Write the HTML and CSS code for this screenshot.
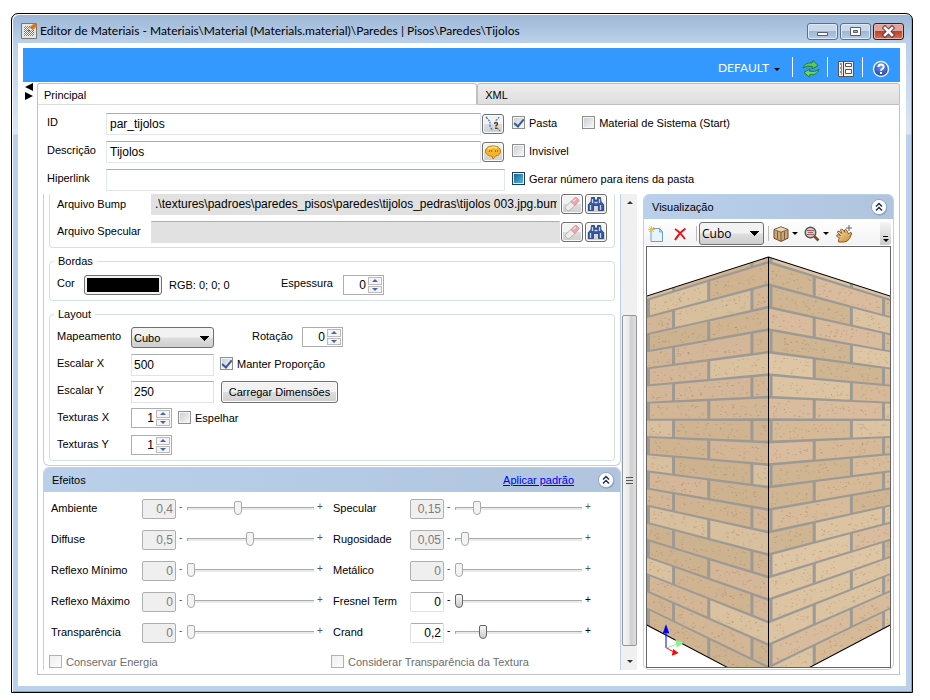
FILE: index.html
```html
<!DOCTYPE html>
<html lang="pt-BR">
<head>
<meta charset="utf-8">
<title>Editor de Materiais</title>
<link rel="stylesheet" href="styles.css">
</head>
<body>
<svg class="defs" width="0" height="0" aria-hidden="true">
  <defs>
    <linearGradient id="tan" x1="0" y1="0" x2="1" y2="1"><stop offset="0" stop-color="#fbe3ae"/><stop offset="1" stop-color="#c98a2e"/></linearGradient>
    <radialGradient id="blue" cx=".5" cy=".3" r=".7"><stop offset="0" stop-color="#6f9cf0"/><stop offset="1" stop-color="#1b3fae"/></radialGradient>
    <symbol id="i-eraser" viewBox="0 0 16 16">
      <path d="M1.500 10.500 7 5.500l4 4-5 4.500Q4.500 15.300 3.200 14.200L1.800 13Q.5 11.800 1.500 10.500z" fill="#eceaea" stroke="#aaa" stroke-width=".8"/>
      <path d="M7 5.500 10.800 1.800q1-.9 2 0l1.700 1.700q1 1 0 2L11 9.500z" fill="#eba5ad" stroke="#d58d95" stroke-width=".8"/>
      <path d="m9 5.500 3-2.500" stroke="#fbd9dc" stroke-width="1.400"/>
    </symbol>
    <symbol id="i-find" viewBox="0 0 16 16">
      <path d="M3.500 1.500h3V4h3V1.500h3l.5 4 2.500 3v6h-5v-5h-5v5h-5v-6L3 5.500z" fill="#35599c" stroke="#1d3a75" stroke-width=".8"/>
      <path d="M2.500 9v5M12.500 9v5M4.500 3v4M11.500 3v4M6.500 6.500h3" fill="none" stroke="#c5d8f5" stroke-width="1.300"/>
    </symbol>
    <symbol id="i-chevrons" viewBox="0 0 18 18">
      <circle cx="9.500" cy="9.800" r="7.800" fill="#8494b0"/><circle cx="9" cy="9" r="7.600" fill="#fff" stroke="#97a9c6"/>
      <path d="m6 8.500 3-3 3 3M6 12.500l3-3 3 3" fill="none" stroke="#1c2c62" stroke-width="1.500"/>
    </symbol>
  </defs>
</svg>

<div class="window">
  <header class="titlebar">
    <svg class="app-icon" width="16" height="16" viewBox="0 0 16 16">
      <path d="M.5.5h15v15H.5z" fill="#e9e5de" stroke="#777" /><path d="M3 3h10v10H3z" fill="#777"/>
      <path d="M3 3.500h10M3 5.500h10M3 7.500h10M3 9.500h10M3 11.500h10" stroke="#fff" stroke-dasharray="1 1"/>
      <path d="M3 4.500h10M3 6.500h10M3 8.500h10M3 10.500h10M3 12.500h10" stroke="#fff" stroke-dasharray="1 1" stroke-dashoffset="1"/>
      <path d="m8 5 3-3 4-2 1 3-4 4z" fill="#d9761c"/><path d="M7.500 8 8.500 5l3 2z" fill="#fff"/><path d="m7 8.500 1-2 1.500 1.500z" fill="#222"/>
    </svg>
    <h1 class="title">Editor de Materiais - Materiais\Material (Materials.material)\Paredes | Pisos\Paredes\Tijolos</h1>
    <div class="win-buttons">
      <button class="win-btn" aria-label="Minimizar"><svg width="29" height="15" viewBox="0 0 29 15"><path d="M9.500 8.500h10v3h-10z" fill="#fff" stroke="#555e6e"/></svg></button>
      <button class="win-btn" aria-label="Maximizar"><svg width="29" height="15" viewBox="0 0 29 15"><path d="M9.500 3.500h10v8h-10z" fill="#fff" stroke="#555e6e"/><path d="M12.500 6.500h4v2h-4z" fill="#9db4d3" stroke="#555e6e"/></svg></button>
      <button class="win-btn close" aria-label="Fechar"><svg width="29" height="15" viewBox="0 0 29 15"><path d="m11 4 7 7M18 4l-7 7" stroke="#5d3a3e" stroke-width="4.500" stroke-linecap="square"/><path d="m11 4 7 7M18 4l-7 7" stroke="#fff" stroke-width="2.600" stroke-linecap="square"/></svg></button>
    </div>
  </header>

  <div class="client">
    <nav class="toolbar">
      <button class="menu-btn">DEFAULT <i class="caret"></i></button>
      <span class="divider"></span>
      <button class="tool" aria-label="Atualizar"><svg width="18" height="18" viewBox="0 0 18 18">
        <path d="M1 8Q3 2 10 3l1-2.500 5 5-6 3.500.5-2.500Q5 5 1 8z" fill="#5fc950" stroke="#187c25" stroke-width=".9"/>
        <path d="M17 9.500Q15 15.500 8 14.500L7 17 2 12.300 8 9l-.5 2.300Q13 12.500 17 9.500z" fill="#6ed45c" stroke="#187c25" stroke-width=".9"/></svg></button>
      <span class="divider"></span>
      <button class="tool" aria-label="Propriedades"><svg width="18" height="18" viewBox="0 0 18 18">
        <path d="M1.500 1.500h15v15h-15z" fill="#f3f0ea" stroke="#555"/><path d="M6.500 1v16" stroke="#444"/><path d="M8.500 3.500h6v3h-6zM8.500 9.500h6v4h-6z" fill="#fff" stroke="#555"/>
        <path d="M3 4h2M4 6h1M3 8h2M4 10h1M3 12h2M4 14h1" stroke="#333"/></svg></button>
      <span class="divider"></span>
      <button class="tool" aria-label="Ajuda"><svg width="18" height="18" viewBox="0 0 18 18">
        <circle cx="9" cy="9" r="7.500" fill="url(#blue)" stroke="#e5edfb" stroke-width="1.500"/>
        <path d="M6.300 7Q6.500 4.500 9 4.500T11.700 7Q11.700 8.300 10 9.200q-1 .5-1 1.600" fill="none" stroke="#fff" stroke-width="1.900"/><path d="M8 12h2v2H8z" fill="#fff"/></svg></button>
    </nav>

    <div class="workspace">
      <div class="splitter"><svg width="9" height="18" viewBox="0 0 9 18"><path d="M8 0v8L0 4zM0 9v8l8-4z"/></svg></div>
      <main class="tabs">
        <div class="tablist" role="tablist">
          <button class="tab active" role="tab" aria-selected="true">Principal</button>
          <button class="tab" role="tab" aria-selected="false">XML</button>
        </div>

        <div class="tabpage">
          <section class="identity">
            <label class="lbl" for="id">ID</label>
            <div class="line">
              <input class="field" id="id" value="par_tijolos">
              <button class="icon-btn" aria-label="Gerar ID"><svg width="18" height="16" viewBox="0 0 18 16">
                <path d="M2 1q3 3 4 5v4q1 3 3 4M15 1q-1 2-4 4M13 12l3 3" fill="none" stroke="#2b6fd4" stroke-width="1.200" stroke-dasharray="2 1"/>
                <path d="M10.500 8q0-1.500 1.500-1.500T13.500 8q0 1-1.500 1.800v.7" fill="none" stroke="#6a3b08" stroke-width="1.500"/><path d="M11 11.500h2V13h-2z" fill="#6a3b08"/></svg></button>
            </div>
            <div class="checks">
              <label class="check"><input type="checkbox" checked>Pasta</label>
              <label class="check">
                <input type="checkbox">Material de Sistema (Start)</label>
            </div>

            <label class="lbl" for="desc">Descrição</label>
            <div class="line">
              <input class="field" id="desc" value="Tijolos">
              <button class="icon-btn" aria-label="Traduzir"><svg width="18" height="16" viewBox="0 0 18 16">
                <path d="M9 2c5 0 7.500 2 7.500 5s-2 4.500-5 5L9 15l-1-2.800C4 12 1.500 10 1.500 7S4 2 9 2z" fill="#f6b526" stroke="#c47d0b"/>
                <path d="M4 5q4-3 9-1" fill="none" stroke="#fde9a9" stroke-width="1.500"/><path d="M5.500 6v2M7.500 6v2M11.500 6v2M13.500 6v2" stroke="#c0601a"/></svg></button>
            </div>
            <div class="checks"><label class="check"><input type="checkbox">Invisível</label></div>

            <label class="lbl" for="link">Hiperlink</label>
            <div class="line wide-line"><input class="field" id="link"></div>
            <div class="checks"><label class="check"><input type="checkbox" class="mixed">Gerar número para itens da pasta</label></div>
          </section>

          <div class="columns">
            <div class="scroller">
              <div class="content">
                <section class="panel top-panel">
                  <div class="group files">
                    <label for="bump">Arquivo Bump</label>
                    <div class="file-line">
                      <input class="field gray" id="bump" readonly value=".\textures\padroes\paredes_pisos\paredes\tijolos_pedras\tijolos 003.jpg.bump">
                      <button class="icon-btn" aria-label="Limpar"><svg width="16" height="16"><use href="#i-eraser"/></svg></button>
                      <button class="icon-btn" aria-label="Procurar"><svg width="16" height="16"><use href="#i-find"/></svg></button>
                    </div>
                    <label for="spec">Arquivo Specular</label>
                    <div class="file-line">
                      <input class="field gray" id="spec" readonly>
                      <button class="icon-btn" aria-label="Limpar"><svg width="16" height="16"><use href="#i-eraser"/></svg></button>
                      <button class="icon-btn" aria-label="Procurar"><svg width="16" height="16"><use href="#i-find"/></svg></button>
                    </div>
                  </div>

                  <fieldset class="group borders">
                    <legend>Bordas</legend>
                    <div class="row">
                      <span class="cor">Cor</span>
                      <button class="swatch" aria-label="Cor da borda"><i></i></button>
                      <span class="rgb">RGB: 0; 0; 0</span>
                      <label class="thick" for="esp">Espessura</label>
                      <span class="spin"><input id="esp" value="0"><span class="arrows"><button aria-label="Aumentar"><i class="up"></i></button><button aria-label="Diminuir"><i class="down"></i></button></span></span>
                    </div>
                  </fieldset>

                  <fieldset class="group layout">
                    <legend>Layout</legend>
                    <div class="rows">
                      <div class="row">
                        <label class="name" for="map">Mapeamento</label>
                        <select class="combo" id="map"><option>Cubo</option></select>
                        <label class="rotation" for="rot">Rotação</label>
                        <span class="spin"><input id="rot" value="0"><span class="arrows"><button aria-label="Aumentar"><i class="up"></i></button><button aria-label="Diminuir"><i class="down"></i></button></span></span>
                      </div>
                      <div class="row">
                        <label class="name" for="ex">Escalar X</label>
                        <input class="field small" id="ex" value="500">
                        <label class="check"><input type="checkbox" checked>Manter Proporção</label>
                      </div>
                      <div class="row">
                        <label class="name" for="ey">Escalar Y</label>
                        <input class="field small" id="ey" value="250">
                        <button class="push">Carregar Dimensões</button>
                      </div>
                      <div class="row">
                        <label class="name" for="tx">Texturas X</label>
                        <span class="spin"><input id="tx" value="1"><span class="arrows"><button aria-label="Aumentar"><i class="up"></i></button><button aria-label="Diminuir"><i class="down"></i></button></span></span>
                        <label class="check"><input type="checkbox">Espelhar</label>
                      </div>
                      <div class="row">
                        <label class="name" for="ty">Texturas Y</label>
                        <span class="spin"><input id="ty" value="1"><span class="arrows"><button aria-label="Aumentar"><i class="up"></i></button><button aria-label="Diminuir"><i class="down"></i></button></span></span>
                      </div>
                    </div>
                  </fieldset>
                </section>

                <section class="panel effects">
                  <header class="panel-head">
                    <h2>Efeitos</h2>
                    <a href="#padrao">Aplicar padrão</a>
                    <button class="collapse" aria-label="Recolher"><svg width="18" height="18"><use href="#i-chevrons"/></svg></button>
                  </header>
                  <div class="effect-grid">
                    <div class="effect off"><label for="e1">Ambiente</label><input class="num" id="e1" value="0,4" disabled><span>-</span><input type="range" aria-label="Ambiente" max="1" step="0.01" value="0.4" disabled><span>+</span></div>
                    <div class="effect off"><label for="e2">Specular</label><input class="num" id="e2" value="0,15" disabled><span>-</span><input type="range" aria-label="Specular" max="1" step="0.01" value="0.15" disabled><span>+</span></div>
                    <div class="effect off"><label for="e3">Diffuse</label><input class="num" id="e3" value="0,5" disabled><span>-</span><input type="range" aria-label="Diffuse" max="1" step="0.01" value="0.5" disabled><span>+</span></div>
                    <div class="effect off"><label for="e4">Rugosidade</label><input class="num" id="e4" value="0,05" disabled><span>-</span><input type="range" aria-label="Rugosidade" max="1" step="0.01" value="0.05" disabled><span>+</span></div>
                    <div class="effect off"><label for="e5">Reflexo Mínimo</label><input class="num" id="e5" value="0" disabled><span>-</span><input type="range" aria-label="Reflexo Mínimo" max="1" step="0.01" value="0" disabled><span>+</span></div>
                    <div class="effect off"><label for="e6">Metálico</label><input class="num" id="e6" value="0" disabled><span>-</span><input type="range" aria-label="Metálico" max="1" step="0.01" value="0" disabled><span>+</span></div>
                    <div class="effect off"><label for="e7">Reflexo Máximo</label><input class="num" id="e7" value="0" disabled><span>-</span><input type="range" aria-label="Reflexo Máximo" max="1" step="0.01" value="0" disabled><span>+</span></div>
                    <div class="effect"><label for="e8">Fresnel Term</label><input class="num" id="e8" value="0"><span>-</span><input type="range" aria-label="Fresnel Term" max="1" step="0.01" value="0"><span>+</span></div>
                    <div class="effect off"><label for="e9">Transparência</label><input class="num" id="e9" value="0" disabled><span>-</span><input type="range" aria-label="Transparência" max="1" step="0.01" value="0" disabled><span>+</span></div>
                    <div class="effect"><label for="e10">Crand</label><input class="num" id="e10" value="0,2"><span>-</span><input type="range" aria-label="Crand" max="1" step="0.01" value="0.2"><span>+</span></div>
                    <label class="check disabled"><input type="checkbox" disabled>Conservar Energia</label>
                    <label class="check disabled"><input type="checkbox" disabled>Considerar Transparência da Textura</label>
                  </div>
                </section>
              </div>

              <div class="scrollbar">
                <button aria-label="Subir"><i class="up"></i></button>
                <div class="track"><div class="thumb"><i></i></div></div>
                <button aria-label="Descer"><i class="down"></i></button>
              </div>
            </div>

            <section class="panel preview">
              <header class="panel-head">
                <h2>Visualização</h2>
                <button class="collapse" aria-label="Recolher"><svg width="18" height="18"><use href="#i-chevrons"/></svg></button>
              </header>
              <div class="preview-tools">
                <button class="tool" aria-label="Novo"><svg width="16" height="16" viewBox="0 0 16 16"><path d="M3 2.500h8.500L14.500 6v9.500H3z" fill="#e8f3fd" stroke="#6d9fcb"/><path d="M11.500 2.500V6h3z" fill="#b8d6ef" stroke="#6d9fcb" stroke-width=".8"/><path d="m1 1 5 5M6 1 1 6M3.500 0v7M0 3.500h7" stroke="#ecc33a"/></svg></button>
                <button class="tool" aria-label="Excluir"><svg width="16" height="16" viewBox="0 0 16 16"><path d="M3 3q5 3 10 10M13.500 2.500Q7 7 3 14" fill="none" stroke="#e0181c" stroke-width="2"/></svg></button>
                <span class="sep"></span>
                <select class="combo" aria-label="Forma"><option>Cubo</option></select>
                <span class="sep"></span>
                <button class="tool wide" aria-label="Vista"><svg width="16" height="16" viewBox="0 0 16 16"><path d="m8 .8 7 2.700v8.700l-7 3.200-7-3.200V3.500z" fill="#c9a67a" stroke="#6b4c2a"/><path d="m1.500 3.700 6.500 2.500 6.500-2.500L8 1.300z" fill="#ecd6b3"/><path d="M1 3.500 8 6.200l7-2.700M8 6.200v9M4.500 5.500v7.500M11.500 5.500v7.500" fill="none" stroke="#6b4c2a" stroke-width=".8"/></svg><i class="caret"></i></button>
                <button class="tool wide" aria-label="Zoom"><svg width="16" height="16" viewBox="0 0 16 16"><circle cx="6.500" cy="6.500" r="5.300" fill="#c3d3d0" stroke="#555" stroke-width="1.400"/><path d="M3 4.500h7M3 8.500h7" stroke="#c33" stroke-width=".8"/><path d="M4 6.500h5" stroke="#777"/><path d="m10.500 10.500 4 4" stroke="#7b4e24" stroke-width="2.600"/></svg><i class="caret"></i></button>
                <button class="tool" aria-label="Mover"><svg width="18" height="18" viewBox="0 0 18 18"><path d="M1.500 11q0-1.800 2-1.200l2 .7L2.500 7.500Q2.300 5.600 4 6.200L7 8.500 5.500 5q.5-1.800 2.200-.5L10 7.500 9.500 5q1-1.500 2.200.2L13.500 9l1.500-1.500q2-.2 1.500 1.500l-2 4.500q-2 3.500-5.500 3.500H3.500V14.500L4.500 13z" fill="url(#tan)" stroke="#84501a" stroke-width=".9"/><path d="M14 0v6M11 3h6" stroke="#555" stroke-width=".9"/></svg></button>
                <span class="overflow"><i class="bar"></i><i class="caret"></i></span>
              </div>
              <div class="scene"><svg id="scene" viewBox="0 0 243 418" preserveAspectRatio="xMidYMin slice" role="img" aria-label="Cubo com textura de tijolos"></svg></div>
            </section>
          </div>
        </div>
      </main>
    </div>
  </div>
</div>
<script src="scene.js"></script>
</body>
</html>
```
FILE: styles.css
```css
* { box-sizing: border-box; }
html, body { height: 100%; }
body {
  margin: 0;
  padding: 13px 17px 7px 11px;
  background: #fff;
  color: #000;
  font: 11px/16px "Liberation Sans", Arial, sans-serif;
}
button, input, select { font: inherit; color: inherit; margin: 0; }
button { padding: 0; border: 0; background: none; }
h1, h2 { margin: 0; font: inherit; }
svg { display: block; flex: none; }
.defs { position: absolute; }

/* window frame */
.window {
  height: 100%;
  min-height: 680px;
  display: flex;
  flex-direction: column;
  padding: 0 6px 6px;
  border: 1px solid #000;
  border-radius: 7px 7px 0 0;
  background: linear-gradient(#9cb6d4, #bad0ea 28px, #dbe7f5 120px, #b9d1ea 121px);
  box-shadow: inset 1px 1px #fff, inset -1px -1px #3cc4de;
}
.titlebar { display: flex; align-items: center; height: 29px; padding: 7px 2px 2px 3px; }
.title {
  flex: 1;
  margin-left: 3px;
  font: 12px/16px Lato, "Open Sans", sans-serif;
  white-space: nowrap;
}
.win-buttons { display: flex; gap: 2px; }
.win-btn {
  width: 31px; height: 17px;
  border: 1px solid #5a6f8c;
  border-radius: 3px;
  background: linear-gradient(#c9d8ea 45%, #9fb7d4 50%, #b7cde8);
  box-shadow: inset 0 0 0 1px #dfe9f5;
}
.win-btn.close {
  border-color: #4c1420;
  background: linear-gradient(#e3a396 45%, #c0402c 50%, #d0725a);
  box-shadow: inset 0 0 0 1px #e8b5ab;
}

.client {
  flex: 1;
  min-height: 0;
  display: flex;
  flex-direction: column;
  padding: 5px 6px 11px 5px;
  background: #fff;
}
.toolbar {
  display: flex;
  align-items: center;
  justify-content: flex-end;
  height: 34px;
  padding: 6px 10px 0 0;
  background: #39f;
}
.menu-btn {
  display: flex;
  align-items: center;
  gap: 5px;
  margin-right: 12px;
  color: #fff;
  font: 12px/16px Lato, "Open Sans", sans-serif;
}
.caret { border: 3px solid transparent; border-top-color: #000; border-bottom: 0; }
.toolbar .menu-btn .caret { margin-top: 2px; }
.divider { width: 1px; height: 20px; margin-top: -2px; background: #fff; }
.toolbar .tool { margin: 2px 0 0 9px; }
.toolbar .tool + .divider { margin-left: 7px; }

.workspace { flex: 1; min-height: 0; display: flex; padding-top: 1px; }
.splitter { width: 14px; padding: 0 0 0 2px; }
.tabs { flex: 1; min-width: 0; display: flex; flex-direction: column; }
.tablist { display: flex; height: 22px; }
.tab {
  flex: 422 1 0;
  padding: 2px 7px 0;
  border: 1px solid #c0c0c0;
  border-radius: 3px 3px 0 0;
  background: linear-gradient(#ededed, #dedede);
  text-align: left;
}
.tab.active { flex-grow: 441; padding-left: 6px; background: #fff; border-bottom-color: #dcdcdc; }
.tabpage {
  flex: 1;
  min-height: 0;
  display: flex;
  flex-direction: column;
  border: 1px solid #c0c0c0;
  border-top: 0;
  padding: 8px 5px 4px;
}

/* identity form */
.identity {
  display: grid;
  grid-template-columns: 59px 399px 1fr;
  grid-auto-rows: 22px;
  row-gap: 6px;
  padding-left: 4px;
}
.lbl { line-height: 18px; }
.line { display: flex; gap: 1px; padding-right: 1px; }
.wide-line { padding: 0; }
.field {
  flex: 1;
  min-width: 0;
  height: 22px;
  padding: 0 3px;
  border: 1px solid #e2e6ef;
  border-top-color: #abadb3;
  background: #fff;
  font-size: 12px;
}
.icon-btn {
  display: flex;
  align-items: center;
  justify-content: center;
  width: 22px; height: 20px;
  margin-top: 1px;
  flex: none;
  border: 1px solid #707070;
  border-radius: 3px;
  background: linear-gradient(#f2f2f2 48%, #ddd 52%, #cfcfcf);
  box-shadow: inset 0 0 0 1px #fafafa;
}
.checks { display: flex; gap: 25px; padding: 1px 0 0 7px; }
.check { display: flex; align-items: center; gap: 4px; height: 17px; white-space: nowrap; }
input[type=checkbox] {
  appearance: none;
  width: 13px; height: 13px;
  flex: none;
  border: 1px solid #8e8f8f;
  background: linear-gradient(135deg, #cbcfd5, #f6f6f6) 50% / 9px 9px no-repeat #f4f4f4;
  display: grid;
  place-items: center;
}
input[type=checkbox]:checked::before {
  content: "";
  width: 4px; height: 8px;
  margin-top: -2px;
  border: solid #3c5a9a;
  border-width: 0 2px 2px 0;
  transform: rotate(40deg);
}
input[type=checkbox].mixed {
  background: linear-gradient(135deg, #17638f, #2c86b8 40%, #5cb4dc) 50% / 9px 9px no-repeat #e3f1f7;
  border-color: #1e3c56;
}
input[type=checkbox]:disabled { border-color: #b1b1b1; background: linear-gradient(135deg, #f0f0f0, #fbfbfb); }
.check.disabled { color: #6d6d6d; }

/* two-column area */
.columns { flex: 1; min-height: 0; display: flex; gap: 6px; padding-top: 3px; }
.scroller { flex: 1; min-width: 0; display: flex; overflow: hidden; }
.content { flex: 1; min-width: 0; }
.panel { border: 1px solid #b9d1ea; border-radius: 6px; }
.top-panel { padding: 0 5px 4px; border-top: 0; border-radius: 0 0 6px 6px; }
.group { margin: 0; border: 1px solid #d5dfe5; border-radius: 4px; min-width: 0; }
.group legend { margin-left: -3px; padding: 0 4px; }
.files {
  display: grid;
  grid-template-columns: 94px 1fr;
  row-gap: 6px;
  padding: 0 7px 4px;
  border-top: 0;
  border-radius: 0 0 4px 4px;
}
.files label { line-height: 20px; }
.file-line { display: flex; gap: 2px; }
.gray { background: #e1e1e1; border-color: #e1e1e1; border-top-color: #abadb3; padding-right: 2px; }
#bump { height: 21px; border-top: 0; }
.file-line .icon-btn:first-of-type { margin-left: -1px; }
#bump ~ .icon-btn { margin-top: 0; }

.borders, .layout { padding: 0 7px; margin-top: 5px; }
.borders legend, .layout legend { height: 16px; }
.row { display: flex; align-items: flex-start; height: 22px; }
.borders .row { height: 31px; padding-top: 6px; }
.cor { width: 27px; }
.swatch {
  width: 78px; height: 20px; padding: 2px;
  border: 1px solid #707070; border-radius: 3px;
  background: #f2f2f2;
}
.swatch i { display: block; height: 14px; background: #000; }
.rgb { width: 119px; padding: 2px 0 0 7px; }
.thick { width: 62px; }
.spin {
  display: flex;
  width: 41px; height: 20px;
  border: 1px solid #abadb3;
  background: #fff;
}
.spin input { flex: 1; min-width: 0; border: 0; padding: 0 2px 1px; text-align: right; background: none; font-size: 12px; }
.arrows { display: flex; flex-direction: column; gap: 1px; width: 15px; padding: 1px 1px 1px 0; }
.arrows button {
  flex: 1;
  display: grid;
  place-items: center;
  border: 1px solid #bcbcbc;
  background: #f4f4f4;
}
.up, .down { width: 0; border: 3px solid transparent; }
.up { border-top: 0; border-bottom-color: #4a63a8; }
.down { border-bottom: 0; border-top-color: #4a63a8; }

.rows { display: grid; row-gap: 5px; padding: 5px 0 3px; }
.name { width: 74px; flex: none; white-space: nowrap; line-height: 18px; }
.combo {
  width: 83px; height: 21px;
  padding: 0 2px;
  appearance: none;
  border: 1px solid #707070;
  border-radius: 3px;
  background:
    linear-gradient(to bottom right, #000 50%, transparent 52%) right 4px top 8px / 5px 5px no-repeat,
    linear-gradient(to bottom left, #000 50%, transparent 52%) right 8px top 8px / 5px 5px no-repeat,
    linear-gradient(#f2f2f2 48%, #ddd 52%, #cfcfcf);
}
.rotation { width: 88px; padding-left: 38px; line-height: 18px; }
.small { flex: none; width: 83px; padding: 0 2px; border-color: #e2e3ea; border-top-color: #abadb3; }
.row .check { margin: 1px 0 0 6px; }
.push {
  width: 117px; height: 22px;
  margin-left: 7px;
  border: 1px solid #707070;
  border-radius: 3px;
  background: linear-gradient(#f2f2f2 48%, #ddd 52%, #cfcfcf);
  box-shadow: inset 0 0 0 1px #fafafa;
}

/* effects */
.effects { margin-top: 1px; }
.panel-head {
  display: flex;
  align-items: center;
  height: 24px;
  padding: 0 5px 0 8px;
  background: linear-gradient(90deg, #bad0ea, #b0c4de);
  border-radius: 5px 5px 0 0;
}
.panel-head h2 { flex: 1; }
.panel-head a { color: #00f; margin-right: 23px; }
.effect-grid {
  display: grid;
  grid-template-columns: 282px 1fr;
  grid-auto-rows: 31px;
  padding: 7px 6px 0 7px;
}
.effect { display: flex; height: 20px; }
.effect label { width: 91px; line-height: 18px; }
.effect:nth-child(even) label { width: 77px; }
.num {
  width: 34px; height: 20px;
  padding: 0 2px;
  text-align: right;
  border: 1px solid #dcdfe8; border-top-color: #abadb3; border-radius: 2px;
  background: #fff;
  font-size: 12px;
}
.num:disabled { background: #efefef; color: #7d7d7d; border-color: #afafaf; }
.effect span { width: 11px; padding-left: 3px; line-height: 16px; font-size: 10px; }
.effect.off span { color: #555; }
input[type=range] { appearance: none; width: 127px; height: 18px; background: none; }
input[type=range]::-webkit-slider-runnable-track { height: 3px; background: #e7eaea; border-top: 1px solid #aaa; border-left: 1px solid #aaa; }
input[type=range]::-webkit-slider-thumb {
  appearance: none;
  width: 8px; height: 14px;
  margin-left: -1px;
  margin-top: -7px;
  border: 1px solid #666;
  border-radius: 2px 2px 4px 4px;
  background: linear-gradient(#f6f6f6, #ccc);
}
.off input[type=range]::-webkit-slider-thumb { border-color: #aaa; background: #f3f3f3; }
.effect-grid .check { margin-left: -2px; height: 15px; }

/* scroll bar */
.scrollbar { display: flex; flex-direction: column; width: 16px; padding-left: 1px; background: #f0f0f0; }
.scrollbar button { display: grid; place-items: center; height: 17px; }
.scrollbar .up { border-bottom-color: #333; }
.scrollbar .down { border-top-color: #333; }
.track { flex: 1; display: flex; flex-direction: column; justify-content: flex-end; padding-bottom: 7px; }
.thumb {
  height: 76%;
  display: grid;
  place-items: center;
  border: 1px solid #979797;
  border-radius: 2px;
  background: linear-gradient(90deg, #f5f5f5, #e9e9eb 45%, #cfcfd1 60%, #dedede);
}
.thumb i { width: 7px; height: 8px; background: repeating-linear-gradient(#555 0 1px, #ddd 1px 3px); }

/* preview */
.preview { width: 251px; display: flex; flex-direction: column; }
.preview-tools {
  display: flex;
  align-items: center;
  height: 23px;
  margin: 3px 2px 1px 0;
  padding-left: 4px;
  background: linear-gradient(#fdfdfd, #f3f3f3);
  font: 12px/16px "Open Sans", "Noto Sans", sans-serif;
}
.preview-tools .tool { display: flex; align-items: center; gap: 3px; margin-right: 8px; }
.preview-tools .tool.wide { margin-right: 6px; }
.preview-tools .combo { width: 65px; height: 23px; margin: 0 4px 0 2px; }
.sep { width: 1px; height: 15px; background: #bbb; margin-right: 4px; }
.preview-tools .sep:first-of-type { margin-right: 0; }
.overflow { margin-left: auto; align-self: stretch; width: 11px; display: flex; flex-direction: column; align-items: center; justify-content: flex-end; gap: 2px; padding-bottom: 3px; background: linear-gradient(#f5f5f5, #ccc); border-radius: 0 3px 3px 0; }
.overflow .bar { width: 5px; height: 1px; background: #000; }
.scene { flex: 1; min-height: 0; margin: 0 2px 1px; border: 1px solid #646464; overflow: hidden; }
.scene svg { width: 100%; height: 100%; }
```
FILE: scene.js
```js
// Draws the textured cube seen from one of its vertical edges.
const W = 243, H = 418, EDGE = 121.5;
const centre = { top: 10, bottom: 440 };
const side = { top: 49, bottom: 376 };
const COURSE = 22.4, FIRST = 15, JOINT = 2.6;

let seed = 7;
const rnd = () => (seed = (seed * 16807) % 2147483647) / 2147483647;

// Height on screen of a wall level, at horizontal distance t (0 edge, 1 border).
function level(y, t) {
  const f = (y - centre.top) / (centre.bottom - centre.top);
  const far = side.top + f * (side.bottom - side.top);
  return y + (far - y) * t;
}
const at = (x, y) => `${x.toFixed(1)},${level(y, Math.abs(x - EDGE) / EDGE).toFixed(1)}`;

const faces = [
  { from: 0, to: EDGE, joints: [[2, 62], [27, 105]], shade: ['#d8bf9e', '#d3b695', '#d4b698', '#cdb290', '#dac1a0', '#d0b492'] },
  { from: EDGE, to: W, joints: [[167, 236], [124, 204]], shade: ['#dcc3a2', '#d7bb9a', '#d9bb9d', '#cfb592', '#dec5a4', '#d6ba98'] },
];

let out = '';
for (const face of faces) {
  out += `<polygon fill="#9d9a94" points="${at(face.from, centre.top)} ${at(face.to, centre.top)} ${at(face.to, centre.bottom)} ${at(face.from, centre.bottom)}"/>`;
  for (let row = -1; row < 19; row++) {
    const y0 = Math.max(centre.top, FIRST + row * COURSE + JOINT / 2);
    const y1 = Math.min(centre.bottom, FIRST + (row + 1) * COURSE - JOINT / 2);
    const cuts = [face.from - 1.5, ...face.joints[Math.abs(row) % 2], face.to + 1.5];
    for (let i = 0; i < cuts.length - 1; i++) {
      const a = Math.max(face.from, cuts[i] + 1.5), b = Math.min(face.to, cuts[i + 1] - 1.5);
      if (b <= a) continue;
      const fill = face.shade[Math.floor(rnd() * face.shade.length)];
      out += `<polygon fill="${fill}" points="${at(a, y0)} ${at(b, y0)} ${at(b, y1)} ${at(a, y1)}"/>`;
      if (y1 - y0 < 8) continue;
      const specks = Math.round((b - a) / 2);
      for (let s = 0; s < specks; s++) {
        const x = a + 2 + rnd() * (b - a - 5), y = y0 + 2 + rnd() * (y1 - y0 - 4);
        const [px, py] = at(x, y).split(',');
        out += `<rect x="${px}" y="${py}" width="${(0.7 + rnd()).toFixed(1)}" height="0.8" fill="#9b7658" opacity="${(0.25 + rnd() * 0.4).toFixed(2)}"/>`;
      }
    }
  }
}

out += `<path d="M0 49 ${EDGE} 10 243 49M${EDGE} 10V418M0 376 ${EDGE} 440 243 376" fill="none" stroke="#000"/>`;
out += '<path d="M19.500 399v-18" stroke="#00f"/><path d="m17 384 2.500-7 2.500 7z" fill="#00f" stroke="#00f"/>';
out += '<path d="m20 399 13-5" stroke="#90ee90"/><path d="m30 392 5 2-4 3z" fill="#90ee90" stroke="#90ee90" stroke-width="2"/>';
out += '<path d="m20 399 7 4" stroke="red"/><path d="m27 401 4 3-5 2z" fill="red" stroke="red"/>';
document.getElementById('scene').innerHTML = out;
```
